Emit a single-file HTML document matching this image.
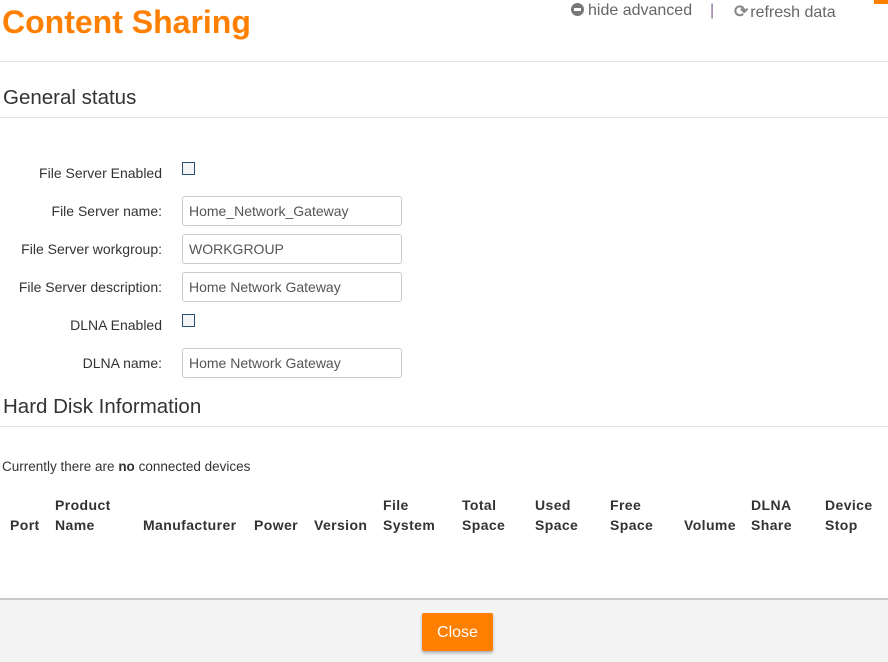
<!DOCTYPE html>
<html><head><style>
body{margin:0;width:888px;height:660px;overflow:hidden;background:#fff;font-family:"Liberation Sans",Arial,sans-serif;color:#333;position:relative}
.a{position:absolute;white-space:nowrap}
.lbl{position:absolute;right:726px;font-size:14px;color:#333}
.inp{position:absolute;left:182px;width:220px;height:30px;border:1px solid #ccc;border-radius:3px;box-sizing:border-box;font-size:14px;color:#555;padding:7px 6px;line-height:15px}
.cb{position:absolute;left:182px;width:11px;height:11px;border:1px solid #2c4f75;background:#f4f4f4}
.hr{position:absolute;left:0;width:888px;height:1px;background:#e5e5e5}
.th{position:absolute;font-size:14px;font-weight:bold;color:#333;line-height:20px;letter-spacing:0.4px}
</style></head><body>
<div class="a" style="left:2px;top:4px;font-size:32px;font-weight:bold;color:#ff7f00">Content Sharing</div>
<div class="a" style="left:571px;top:2px;font-size:16px;color:#666"><span style="display:inline-block;width:13px;height:13px;border-radius:50%;background:#777;position:relative;top:1px;margin-right:4px"><span style="position:absolute;left:3px;top:5px;width:7px;height:3px;background:#fff"></span></span>hide advanced</div>
<div class="a" style="left:710px;top:2px;font-size:16px;color:#8a6aa0">|</div>
<div class="a" style="left:734px;top:2px;font-size:16px;color:#666"><span style="color:#888;font-size:17px;font-weight:bold;margin-right:2px">⟳</span>refresh data</div>
<div class="a" style="left:874px;top:0;width:14px;height:4px;background:#ff7f00"></div>
<div class="hr" style="top:61px"></div>
<div class="a" style="left:3px;top:86px;font-size:20.5px;color:#333">General status</div>
<div class="hr" style="top:117px"></div>
<div class="lbl" style="top:165px">File Server Enabled</div><div class="cb" style="top:162px"></div>
<div class="lbl" style="top:203px">File Server name:</div><div class="inp" style="top:196px">Home_Network_Gateway</div>
<div class="lbl" style="top:241px">File Server workgroup:</div><div class="inp" style="top:234px">WORKGROUP</div>
<div class="lbl" style="top:279px">File Server description:</div><div class="inp" style="top:272px">Home Network Gateway</div>
<div class="lbl" style="top:317px">DLNA Enabled</div><div class="cb" style="top:314px"></div>
<div class="lbl" style="top:355px">DLNA name:</div><div class="inp" style="top:348px">Home Network Gateway</div>
<div class="a" style="left:3px;top:395px;font-size:20.5px;color:#333">Hard Disk Information</div>
<div class="hr" style="top:426px"></div>
<div class="a" style="left:2px;top:459px;font-size:13.5px;color:#333">Currently there are <b>no</b> connected devices</div>
<div class="th" style="left:10px;top:515px">Port</div>
<div class="th" style="left:55px;top:495px">Product<br>Name</div>
<div class="th" style="left:143px;top:515px">Manufacturer</div>
<div class="th" style="left:254px;top:515px">Power</div>
<div class="th" style="left:314px;top:515px">Version</div>
<div class="th" style="left:383px;top:495px">File<br>System</div>
<div class="th" style="left:462px;top:495px">Total<br>Space</div>
<div class="th" style="left:535px;top:495px">Used<br>Space</div>
<div class="th" style="left:610px;top:495px">Free<br>Space</div>
<div class="th" style="left:684px;top:515px">Volume</div>
<div class="th" style="left:751px;top:495px">DLNA<br>Share</div>
<div class="th" style="left:825px;top:495px">Device<br>Stop</div>
<div class="a" style="left:0;top:598px;width:888px;height:62px;background:#f4f4f4;border-top:2px solid #c8c8c8"></div>
<div class="a" style="left:422px;top:613px;width:71px;height:38px;background:#ff7f00;border-radius:2px;box-shadow:0 2px 3px rgba(0,0,0,.3);color:#fff;font-size:16px;text-align:center;line-height:40px">Close</div>
</body></html>
